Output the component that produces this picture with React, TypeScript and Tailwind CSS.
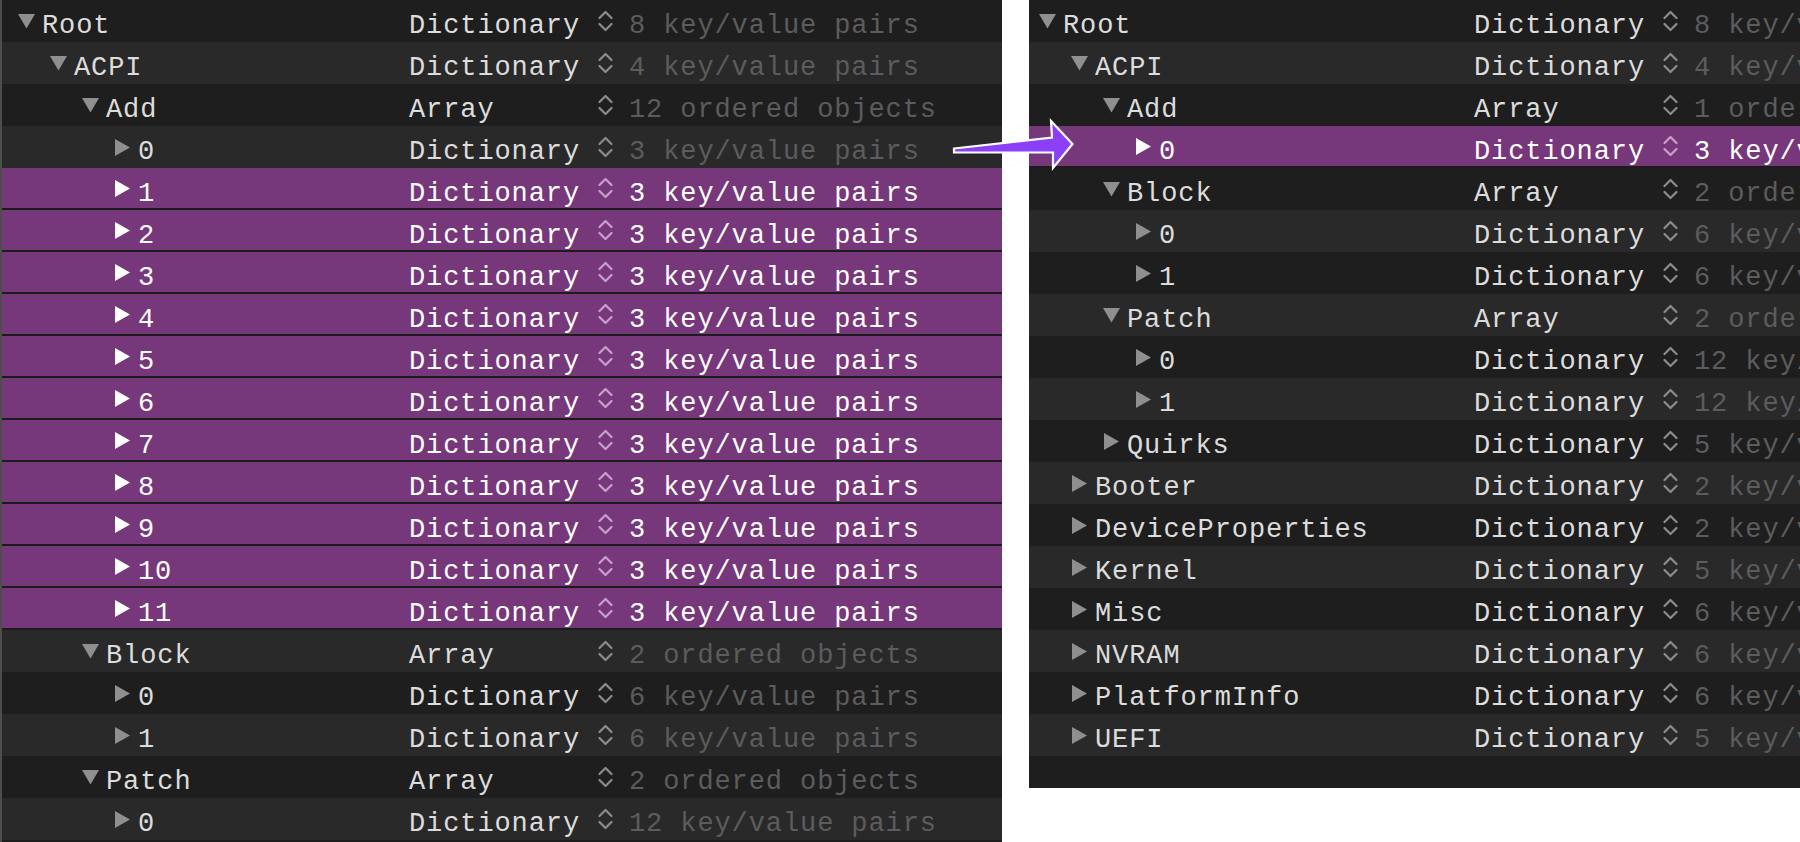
import React from "react";

type Row = {
  level: number;
  key: string;
  type: string;
  value: string;
  open: boolean;
  selected?: boolean;
};

const dict = (n: number) => `${n} key/value pairs`;

const leftRows: Row[] = [
  { level: 0, key: "Root", type: "Dictionary", value: dict(8), open: true },
  { level: 1, key: "ACPI", type: "Dictionary", value: dict(4), open: true },
  { level: 2, key: "Add", type: "Array", value: "12 ordered objects", open: true },
  { level: 3, key: "0", type: "Dictionary", value: dict(3), open: false },
  ...Array.from({ length: 11 }, (_, i) => ({
    level: 3,
    key: String(i + 1),
    type: "Dictionary",
    value: dict(3),
    open: false,
    selected: true,
  })),
  { level: 2, key: "Block", type: "Array", value: "2 ordered objects", open: true },
  { level: 3, key: "0", type: "Dictionary", value: dict(6), open: false },
  { level: 3, key: "1", type: "Dictionary", value: dict(6), open: false },
  { level: 2, key: "Patch", type: "Array", value: "2 ordered objects", open: true },
  { level: 3, key: "0", type: "Dictionary", value: dict(12), open: false },
];

const rightRows: Row[] = [
  { level: 0, key: "Root", type: "Dictionary", value: dict(8), open: true },
  { level: 1, key: "ACPI", type: "Dictionary", value: dict(4), open: true },
  { level: 2, key: "Add", type: "Array", value: "1 ordered object", open: true },
  { level: 3, key: "0", type: "Dictionary", value: dict(3), open: false, selected: true },
  { level: 2, key: "Block", type: "Array", value: "2 ordered objects", open: true },
  { level: 3, key: "0", type: "Dictionary", value: dict(6), open: false },
  { level: 3, key: "1", type: "Dictionary", value: dict(6), open: false },
  { level: 2, key: "Patch", type: "Array", value: "2 ordered objects", open: true },
  { level: 3, key: "0", type: "Dictionary", value: dict(12), open: false },
  { level: 3, key: "1", type: "Dictionary", value: dict(12), open: false },
  { level: 2, key: "Quirks", type: "Dictionary", value: dict(5), open: false },
  { level: 1, key: "Booter", type: "Dictionary", value: dict(2), open: false },
  { level: 1, key: "DeviceProperties", type: "Dictionary", value: dict(2), open: false },
  { level: 1, key: "Kernel", type: "Dictionary", value: dict(5), open: false },
  { level: 1, key: "Misc", type: "Dictionary", value: dict(6), open: false },
  { level: 1, key: "NVRAM", type: "Dictionary", value: dict(6), open: false },
  { level: 1, key: "PlatformInfo", type: "Dictionary", value: dict(6), open: false },
  { level: 1, key: "UEFI", type: "Dictionary", value: dict(5), open: false },
];

const FONT = { fontFamily: '"Liberation Mono", "DejaVu Sans Mono", monospace' };

function Disclosure({ open, selected }: { open: boolean; selected?: boolean }) {
  const color = selected ? "#ffffff" : "#8f8f8f";
  return (
    <div className="flex h-[17px] w-[17px] flex-none items-center justify-center self-center">
      {open ? (
        <svg width="17" height="15" viewBox="0 0 17 15">
          <polygon points="0,0 17,0 8.5,14.5" fill={color} />
        </svg>
      ) : (
        <svg width="15" height="17" viewBox="0 0 15 17">
          <polygon points="0,0 15,8.5 0,17" fill={color} />
        </svg>
      )}
    </div>
  );
}

function Stepper({ selected }: { selected?: boolean }) {
  const color = selected ? "#c6a0c9" : "#8b8b8b";
  return (
    <svg width="15" height="22" viewBox="0 0 15 22" className="flex-none self-center">
      <path d="M1.5 8 L7.5 2 L13.5 8" fill="none" stroke={color} strokeWidth="2.2" strokeLinecap="round" strokeLinejoin="round" />
      <path d="M1.5 14 L7.5 20 L13.5 14" fill="none" stroke={color} strokeWidth="2.2" strokeLinecap="round" strokeLinejoin="round" />
    </svg>
  );
}

function TreeRow({
  row,
  index,
  start,
  keyWidth,
}: {
  row: Row;
  index: number;
  start: number;
  keyWidth: number;
}) {
  const bg = row.selected
    ? "bg-[#77377b] border-b-2 border-[#1c1c1c]"
    : index % 2 === 0
    ? "bg-[#1e1e1e]"
    : "bg-[#292929]";
  const main = row.selected ? "text-white" : "text-[#dcdcdc]";
  const val = row.selected ? "text-white" : "text-[#5c5c5c]";
  return (
    <div className={`flex h-[42px] flex-none items-stretch whitespace-nowrap ${bg}`}>
      <div
        className="flex flex-none items-stretch"
        style={{ width: keyWidth, paddingLeft: start + row.level * 32 }}
      >
        <Disclosure open={row.open} selected={row.selected} />
        <span className={`ml-[7px] self-start pt-[10px] leading-[32px] ${main}`}>{row.key}</span>
      </div>
      <div className="flex w-[189px] flex-none">
        <span className={`self-start pt-[10px] leading-[32px] ${main}`}>{row.type}</span>
      </div>
      <div className="flex w-[31px] flex-none">
        <Stepper selected={row.selected} />
      </div>
      <span className={`flex-none self-start pt-[10px] leading-[32px] ${val}`}>{row.value}</span>
    </div>
  );
}

export default function App() {
  return (
    <div
      className="relative flex h-[842px] w-[1800px] items-start overflow-hidden bg-white text-[27px] tracking-[0.9px]"
      style={FONT}
    >
      <div className="flex h-[842px] w-[1002px] flex-none flex-col overflow-hidden border-l-2 border-[#4d4d4d] bg-[#1e1e1e]">
        {leftRows.map((r, i) => (
          <TreeRow key={i} row={r} index={i} start={16} keyWidth={407} />
        ))}
      </div>
      <div className="ml-[27px] flex h-[788px] w-[771px] flex-none flex-col overflow-hidden bg-[#1e1e1e]">
        {rightRows.map((r, i) => (
          <TreeRow key={i} row={r} index={i} start={10} keyWidth={445} />
        ))}
      </div>
      <svg
        className="pointer-events-none absolute left-0 top-0"
        width="1800"
        height="842"
        viewBox="0 0 1800 842"
      >
        <polygon
          points="954,148.5 1052,137.5 1051,121 1072.5,144 1053,168 1053,152.5 954,152.5"
          fill="#8b3ff6"
          stroke="#ffffff"
          strokeWidth="2.2"
          strokeLinejoin="miter"
        />
      </svg>
    </div>
  );
}
